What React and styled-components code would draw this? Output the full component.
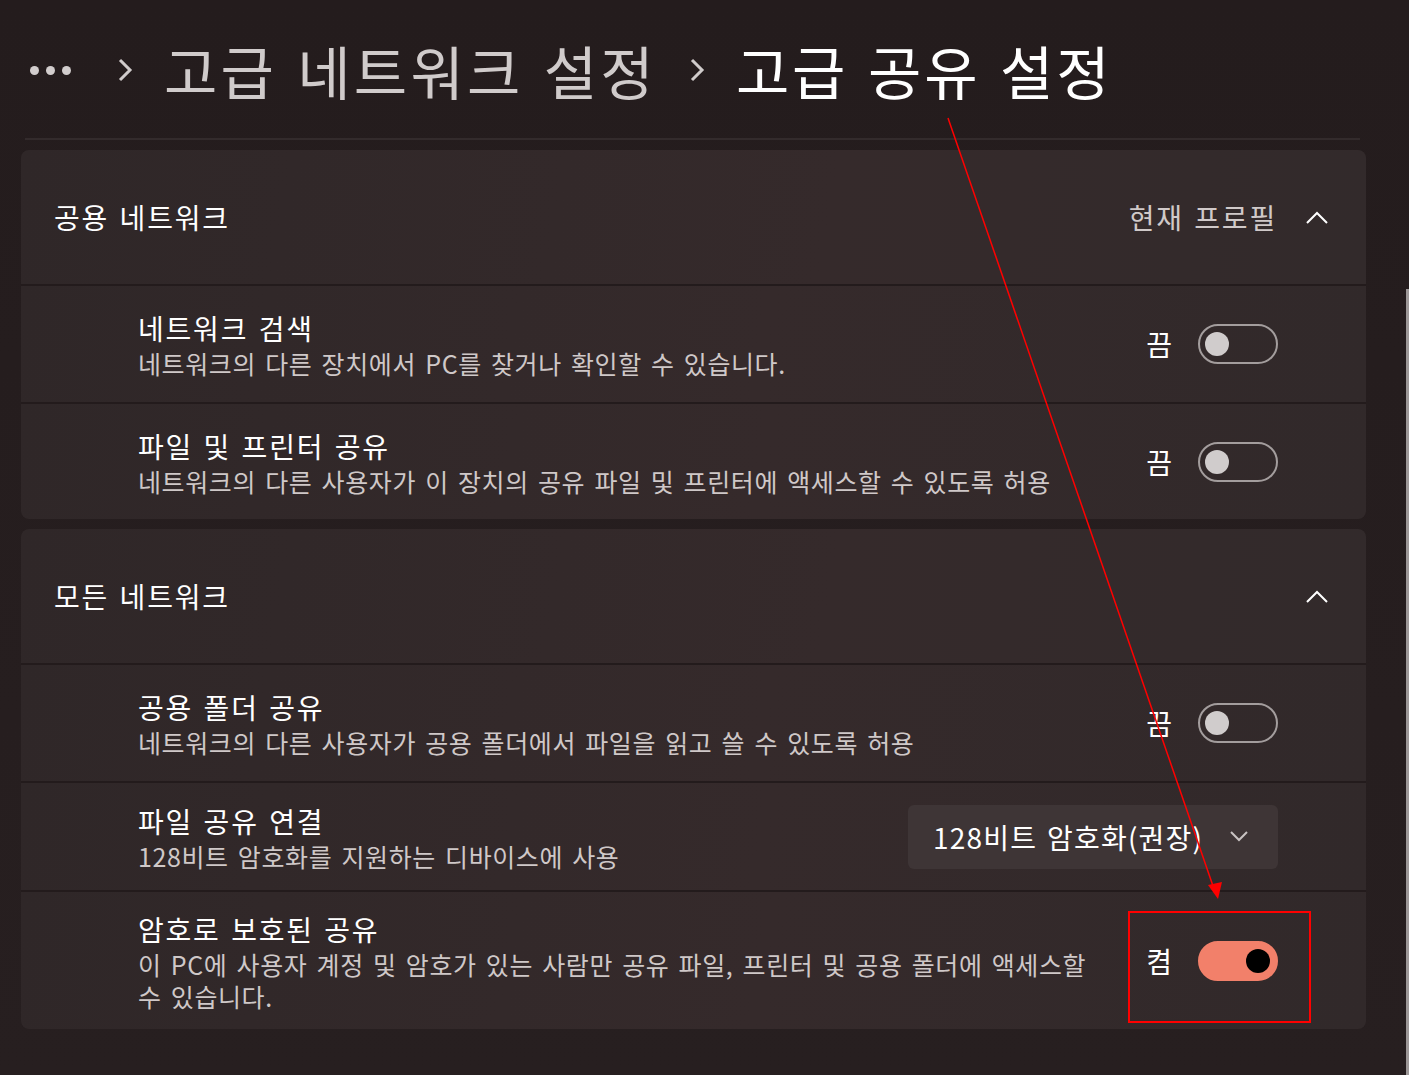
import React from 'react';
import styled, { createGlobalStyle } from 'styled-components';

const GlobalStyle = createGlobalStyle`
    html, body {
        margin: 0;
        padding: 0;
        background: #261e1f;
    }
    body {
        font-family: "Noto Sans CJK KR", "Noto Sans", sans-serif;
        color: #ffffff;
    }
`;

const Page = styled.div`
    position: relative;
    width: 1409px;
    height: 1075px;
    overflow: hidden;
    box-sizing: border-box;
    padding: 0 43px 0 21px;
    background: linear-gradient(180deg, #241c1d 0%, #271f20 100%);
`;

const Breadcrumb = styled.div`
    height: 138px;
    display: flex;
    align-items: center;
    padding: 2px 0 0 9px;
    box-sizing: border-box;
    font-size: 58px;
    line-height: 1;
`;

const Dots = styled.div`
    display: flex;
    gap: 7px;
    margin-right: 46px;

    & > span {
        width: 9px;
        height: 9px;
        border-radius: 50%;
        background: #d2cdcd;
    }
`;

const Crumb = styled.span`
    color: ${p => (p.$current ? '#ffffff' : '#d0cbcb')};
    white-space: pre;
    letter-spacing: ${p => (p.$current ? '2.8px' : '3.2px')};
    word-spacing: 4px;
`;

const CrumbChevron = styled.svg`
    width: 16px;
    height: 26px;
    margin: 0 31px 0 ${p => (p.$first ? '0' : '32px')};
`;

const Separator = styled.div`
    height: 2px;
    margin: 0 6px 10px 4px;
    background: #332b2c;
`;

const Card = styled.section`
    border-radius: 8px;
    overflow: hidden;
    margin-bottom: 10px;
    display: flex;
    flex-direction: column;
    gap: 2px;
    background: #231b1c;
`;

const Header = styled.div`
    height: 134px;
    display: flex;
    align-items: center;
    padding: 0 38px 0 33px;
    background: linear-gradient(100deg, #2f2728 0%, #352a2b 60%, #322a2b 100%);
`;

const HeaderTitle = styled.div`
    flex: 1;
    font-size: 28px;
    color: #ffffff;
    letter-spacing: 1.8px;
    word-spacing: 2.4px;
`;

const HeaderMeta = styled.div`
    font-size: 28px;
    color: #d0c9c9;
    margin-right: 29px;
    letter-spacing: 1.8px;
    word-spacing: 2.4px;
`;

const Row = styled.div`
    min-height: ${p => p.$h}px;
    box-sizing: border-box;
    display: flex;
    align-items: center;
    padding: 16px 88px 16px 117px;
    background: linear-gradient(100deg, #2f2728 0%, #352a2b 55%, #31292a 100%);
`;

const TextBlock = styled.div`
    flex: 1;
    display: flex;
    flex-direction: column;
`;

const Title = styled.div`
    font-size: 28px;
    line-height: 38px;
    color: #ffffff;
    letter-spacing: 1.8px;
    word-spacing: 2.4px;
`;

const Desc = styled.div`
    font-size: 25px;
    line-height: 32px;
    color: #cfc8c8;
    letter-spacing: 0.6px;
    word-spacing: 3px;
    max-width: ${p => p.$max || 'none'};
`;

const ToggleWrap = styled.div`
    display: flex;
    align-items: center;
    gap: 26px;
    font-size: 28px;
    color: #ffffff;
`;

const Switch = styled.div`
    width: 80px;
    height: 40px;
    box-sizing: border-box;
    border-radius: 20px;
    border: 2px solid ${p => (p.$on ? '#f2806a' : '#a39d9d')};
    background: ${p => (p.$on ? '#f2806a' : 'transparent')};
    display: flex;
    align-items: center;
    justify-content: ${p => (p.$on ? 'flex-end' : 'flex-start')};
    padding: 0 6px 0 5px;

    & > span {
        width: 24px;
        height: 24px;
        border-radius: 50%;
        background: ${p => (p.$on ? '#000000' : '#d0cccc')};
    }
`;

const Select = styled.div`
    width: 370px;
    height: 64px;
    box-sizing: border-box;
    border-radius: 6px;
    background: #3e3536;
    display: flex;
    align-items: center;
    padding: 0 30px 0 25px;
    font-size: 28px;
    color: #ffffff;

    & > span {
        flex: 1;
        white-space: nowrap;
        letter-spacing: 1.2px;
        word-spacing: 2.4px;
    }
`;

const Scrollbar = styled.div`
    position: absolute;
    right: 0;
    top: 289px;
    bottom: 0;
    width: 3px;
    background: #9d9898;
`;

const Annotation = styled.svg`
    position: absolute;
    inset: 0;
    width: 1409px;
    height: 1075px;
    pointer-events: none;
`;

const ChevronUp = () => (
    <svg width="22" height="14" viewBox="0 0 22 14">
        <polyline points="1,13 11,3 21,13" fill="none" stroke="#ffffff" strokeWidth="2" />
    </svg>
);

const ChevronDown = () => (
    <svg width="18" height="11" viewBox="0 0 18 11">
        <polyline points="1,1 9,9 17,1" fill="none" stroke="#c9c3c3" strokeWidth="2" />
    </svg>
);

const Toggle = ({ on }) => (
    <ToggleWrap>
        {on ? '켬' : '끔'}
        <Switch $on={on}><span /></Switch>
    </ToggleWrap>
);

const App = () => {
    return (
        <Page>
            <GlobalStyle />
            <Breadcrumb>
                <Dots><span /><span /><span /></Dots>
                <CrumbChevron $first viewBox="0 0 16 26">
                    <polyline points="3,3 13,13 3,23" fill="none" stroke="#d0cbcb" strokeWidth="3" />
                </CrumbChevron>
                <Crumb>고급 네트워크 설정</Crumb>
                <CrumbChevron viewBox="0 0 16 26">
                    <polyline points="3,3 13,13 3,23" fill="none" stroke="#d0cbcb" strokeWidth="3" />
                </CrumbChevron>
                <Crumb $current>고급 공유 설정</Crumb>
            </Breadcrumb>
            <Separator />

            <Card>
                <Header>
                    <HeaderTitle>공용 네트워크</HeaderTitle>
                    <HeaderMeta>현재 프로필</HeaderMeta>
                    <ChevronUp />
                </Header>
                <Row $h={116}>
                    <TextBlock>
                        <Title>네트워크 검색</Title>
                        <Desc>네트워크의 다른 장치에서 PC를 찾거나 확인할 수 있습니다.</Desc>
                    </TextBlock>
                    <Toggle />
                </Row>
                <Row $h={115}>
                    <TextBlock>
                        <Title>파일 및 프린터 공유</Title>
                        <Desc>네트워크의 다른 사용자가 이 장치의 공유 파일 및 프린터에 액세스할 수 있도록 허용</Desc>
                    </TextBlock>
                    <Toggle />
                </Row>
            </Card>

            <Card>
                <Header>
                    <HeaderTitle>모든 네트워크</HeaderTitle>
                    <ChevronUp />
                </Header>
                <Row $h={116}>
                    <TextBlock>
                        <Title>공용 폴더 공유</Title>
                        <Desc>네트워크의 다른 사용자가 공용 폴더에서 파일을 읽고 쓸 수 있도록 허용</Desc>
                    </TextBlock>
                    <Toggle />
                </Row>
                <Row $h={107}>
                    <TextBlock>
                        <Title>파일 공유 연결</Title>
                        <Desc>128비트 암호화를 지원하는 디바이스에 사용</Desc>
                    </TextBlock>
                    <Select>
                        <span>128비트 암호화(권장)</span>
                        <ChevronDown />
                    </Select>
                </Row>
                <Row $h={137}>
                    <TextBlock>
                        <Title>암호로 보호된 공유</Title>
                        <Desc $max="955px">이 PC에 사용자 계정 및 암호가 있는 사람만 공유 파일, 프린터 및 공용 폴더에 액세스할 수 있습니다.</Desc>
                    </TextBlock>
                    <Toggle on />
                </Row>
            </Card>

            <Scrollbar />
            <Annotation viewBox="0 0 1409 1075">
                <line x1="948" y1="118" x2="1213" y2="886" stroke="#ff0000" strokeWidth="1.5" />
                <polygon points="1218,899 1208,885 1222,882" fill="#ff0000" />
                <rect x="1129" y="912" width="181" height="110" fill="none" stroke="#ff0000" strokeWidth="2" />
            </Annotation>
        </Page>
    );
};

export default App;
